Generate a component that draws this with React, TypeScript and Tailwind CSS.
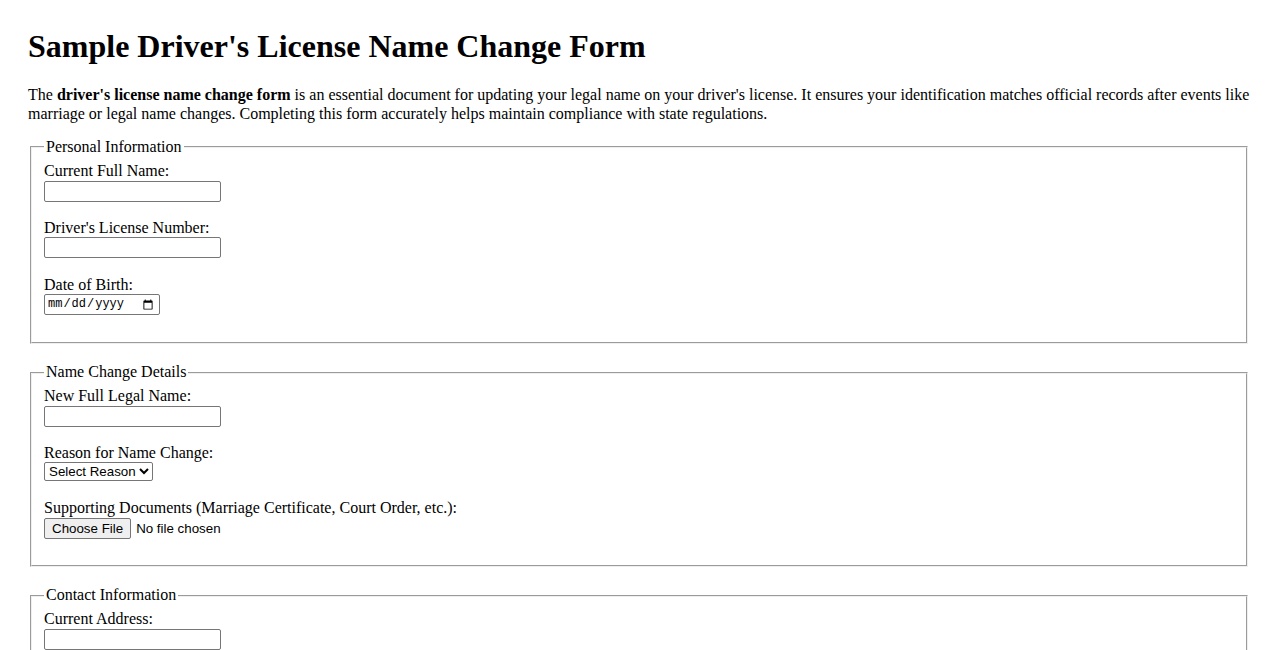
import React from "react";

const inputBase =
  "block h-[21px] border border-solid border-[#767676] rounded-[2px] bg-white px-[2px] py-[1px] font-['Liberation_Sans',Arial,sans-serif] text-[13.333px] text-black";

function Fieldset({ legend, children }: { legend: string; children: React.ReactNode }) {
  return (
    <fieldset className="mx-[2px] mb-[19px] border-2 [border-style:groove] [border-color:ThreeDFace] px-[12px] pt-[5.6px] pb-[10px]">
      <legend className="px-[2px] leading-[18.4px]">{legend}</legend>
      {children}
    </fieldset>
  );
}

function Group({ label, id, children }: { label: string; id: string; children: React.ReactNode }) {
  return (
    <div className="mb-[15px]">
      <label htmlFor={id} className="block leading-[18.4px]">
        {label}
      </label>
      {children}
    </div>
  );
}

function TextField({ id, type = "text" }: { id: string; type?: string }) {
  return (
    <div className="h-[23.3px]">
      <input id={id} type={type} className={`${inputBase} w-[177px]`} />
    </div>
  );
}

export default function App() {
  return (
    <div className="min-h-screen bg-white p-[28px] font-['Liberation_Serif','Times_New_Roman',serif] text-[16px] leading-[18.4px] text-black">
      <h1 className="mb-[21.44px] text-[32px] font-bold leading-[37px]">
        Sample Driver's License Name Change Form
      </h1>
      <p className="mb-[15px]">
        The <strong>driver's license name change form</strong> is an essential document for updating your legal name on
        your driver's license. It ensures your identification matches official records after events like marriage or
        legal name changes. Completing this form accurately helps maintain compliance with state regulations.
      </p>
      <form onSubmit={(e) => e.preventDefault()}>
        <Fieldset legend="Personal Information">
          <Group label="Current Full Name:" id="currentName">
            <TextField id="currentName" />
          </Group>
          <Group label="Driver's License Number:" id="licenseNumber">
            <TextField id="licenseNumber" />
          </Group>
          <Group label="Date of Birth:" id="dob">
            <div className="h-[23.3px]">
              <input
                id="dob"
                type="date"
                className="flex h-[21px] w-[116px] items-center rounded-[2px] border border-solid border-[#767676] bg-white pl-[2px] pr-0 font-['Liberation_Mono','DejaVu_Sans_Mono',monospace] text-[12px] text-black"
              />
            </div>
          </Group>
        </Fieldset>

        <Fieldset legend="Name Change Details">
          <Group label="New Full Legal Name:" id="newName">
            <TextField id="newName" />
          </Group>
          <Group label="Reason for Name Change:" id="reason">
            <div className="h-[21.9px]">
              <select
                id="reason"
                defaultValue=""
                className="block h-[19px] w-[109px] rounded-[2px] border border-solid border-[#767676] bg-white font-['Liberation_Sans',Arial,sans-serif] text-[13.333px] text-black"
              >
                <option value="">Select Reason</option>
                <option value="marriage">Marriage</option>
                <option value="divorce">Divorce</option>
                <option value="court">Court Order</option>
                <option value="other">Other</option>
              </select>
            </div>
          </Group>
          <Group label="Supporting Documents (Marriage Certificate, Court Order, etc.):" id="docs">
            <div className="flex h-[22.6px] items-start">
              <button
                type="button"
                className="h-[21px] rounded-[2px] border border-solid border-[#767676] bg-[#efefef] px-[7px] font-['Liberation_Sans',Arial,sans-serif] text-[13.333px] leading-[17px] text-black"
              >
                Choose File
              </button>
              <span className="ml-[5px] font-['Liberation_Sans',Arial,sans-serif] text-[13.333px] leading-[21px]">
                No file chosen
              </span>
            </div>
          </Group>
        </Fieldset>

        <Fieldset legend="Contact Information">
          <Group label="Current Address:" id="address">
            <TextField id="address" />
          </Group>
          <Group label="Phone Number:" id="phone">
            <TextField id="phone" type="tel" />
          </Group>
          <Group label="Email Address:" id="email">
            <TextField id="email" type="email" />
          </Group>
        </Fieldset>

        <button
          type="submit"
          className="h-[21px] rounded-[2px] border border-solid border-[#767676] bg-[#efefef] px-[6px] font-['Liberation_Sans',Arial,sans-serif] text-[13.333px] text-black"
        >
          Submit Name Change
        </button>
      </form>
    </div>
  );
}
